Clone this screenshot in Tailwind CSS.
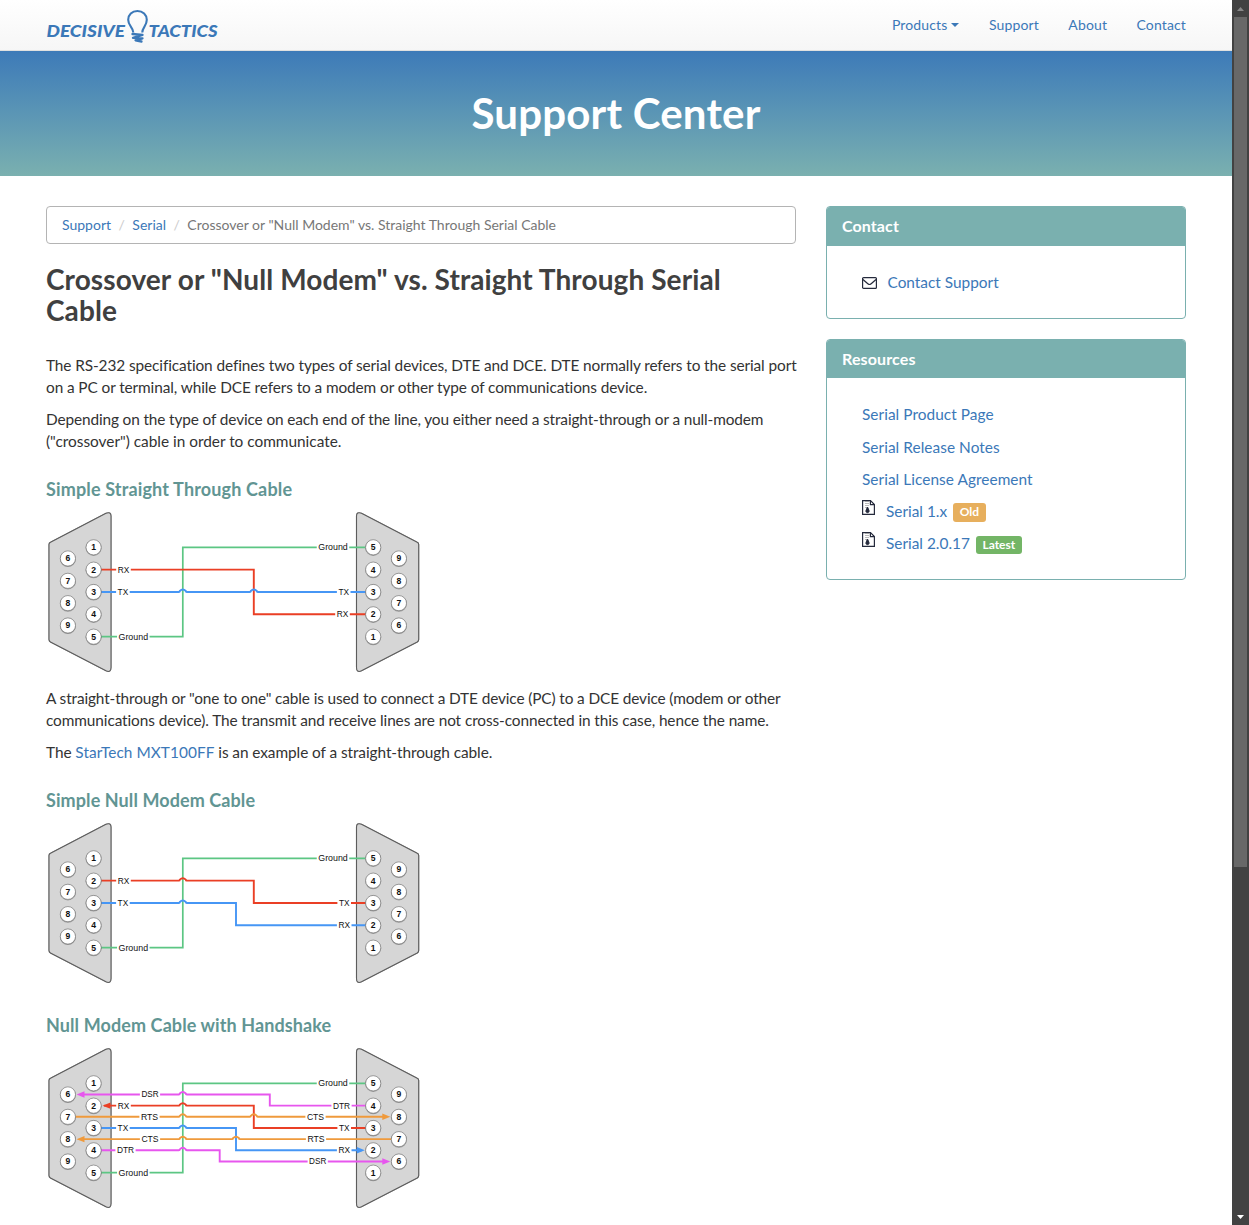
<!DOCTYPE html>
<html lang="en">
<head>
<meta charset="utf-8">
<title>Support Center</title>
<script src="https://cdn.jsdelivr.net/npm/@tailwindcss/browser@4"></script>
</head>
<body class="flex h-[1225px] overflow-hidden bg-white font-['Lato',sans-serif] text-[14px] text-[#333]">
<div class="h-[1225px] w-[1232px] shrink-0 overflow-hidden">
  <nav class="flex h-[51px] items-start justify-between border-b border-[#e0e0e0] bg-linear-to-b from-white to-[#f6f6f6] pr-[46px] pl-[46px]">
    <svg class="mt-[8px] shrink-0" width="174" height="38" viewBox="46 8 174 38" fill="none">
      <g fill="#3b78b8" font-family="Lato, sans-serif" font-weight="900" font-style="italic" font-size="17">
        <text x="46.500" y="37" textLength="78.500" lengthAdjust="spacingAndGlyphs">DECISIVE</text>
        <text x="148.500" y="37" textLength="69" lengthAdjust="spacingAndGlyphs">TACTICS</text>
      </g>
      <path d="M133.300 32.500C133 27 128.200 26 128.200 19.800C128.200 14.700 132 11 137.400 11C142.800 11 146.800 14.700 146.800 19.800C146.800 26 142.200 27.500 142.300 32.500" stroke="#3b78b8" stroke-width="2.100"/>
      <path d="M132.500 34L142.500 34.800L133 37.800L142.500 38.300L135.500 40.300L141.500 41.500" stroke="#3b78b8" stroke-width="2.300" stroke-linejoin="round" stroke-linecap="round"/>
    </svg>
    <div class="flex gap-[29.500px] pt-[15px] leading-5 tracking-[0.130px] text-[#3b78b8]">
      <a class="flex items-center">Products<span class="ml-1 border-x-4 border-t-4 border-x-transparent border-t-[#3b78b8]"></span></a>
      <a>Support</a><a>About</a><a>Contact</a>
    </div>
  </nav>
  <header class="flex h-[125px] items-center justify-center bg-linear-to-b from-[#3d7ab8] to-[#7ab0af] pb-[2px]">
    <h1 class="text-[42px] leading-[46px] font-bold tracking-[0.200px] text-white">Support Center</h1>
  </header>
  <main class="flex gap-[30px] px-[46px] pt-[30px]">
    <article class="w-[750px] shrink-0 text-[15.4px] leading-[22px]">
      <div class="flex h-[38px] items-center rounded border border-[#b4b4b4] px-[15px] text-[14px] text-[#777]">
        <a class="text-[#3b78b8]">Support</a><span class="px-[7.500px] text-[#ccc]">/</span><a class="text-[#3b78b8]">Serial</a><span class="px-[7.500px] text-[#ccc]">/</span><span>Crossover or "Null Modem" vs. Straight Through Serial Cable</span>
      </div>
      <h2 class="mt-[20px] mb-[28px] text-[28px] leading-[31px] font-bold tracking-[0.090px] text-[#404040]">Crossover or "Null Modem" vs. Straight Through Serial<br>Cable</h2>
      <p class="mb-[10px] tracking-[-0.100px] whitespace-nowrap">The RS-232 specification defines two types of serial devices, DTE and DCE. DTE normally refers to the serial port<br>on a PC or terminal, while DCE refers to a modem or other type of communications device.</p>
      <p class="whitespace-nowrap"><span class="tracking-[-0.130px]">Depending on the type of device on each end of the line, you either need a straight-through or a null-modem</span><br><span class="tracking-[-0.010px]">("crossover") cable in order to communicate.</span></p>
      <h4 class="mt-[27px] mb-[11px] text-[18px] leading-5 font-bold tracking-[0.150px] text-[#619593]">Simple Straight Through Cable</h4>
      <svg id="straight" class="block" width="376" height="168" viewBox="46 510 376 168"></svg>
      <p class="mt-[9px] mb-[10px] whitespace-nowrap"><span class="tracking-[-0.125px]">A straight-through or "one to one" cable is used to connect a DTE device (PC) to a DCE device (modem or other</span><br><span class="tracking-[-0.100px]">communications device). The transmit and receive lines are not cross-connected in this case, hence the name.</span></p>
      <p class="tracking-[-0.070px] whitespace-nowrap">The <a class="tracking-[0.050px] text-[#3b78b8]">StarTech MXT100FF</a> is an example of a straight-through cable.</p>
      <h4 class="mt-[27px] mb-[11px] text-[18px] leading-5 font-bold tracking-[0.090px] text-[#619593]">Simple Null Modem Cable</h4>
      <svg id="nullmodem" class="block" width="376" height="168" viewBox="46 510 376 168"></svg>
      <h4 class="mt-[26px] mb-[11px] text-[18px] leading-5 font-bold tracking-[0.100px] text-[#619593]">Null Modem Cable with Handshake</h4>
      <svg id="handshake" class="block" width="376" height="168" viewBox="46 510 376 168"></svg>
    </article>
    <aside class="w-[360px] shrink-0 text-[15.4px] leading-[22px]">
      <section class="mb-5 h-[113px] overflow-hidden rounded border border-[#7ab0af]">
        <h3 class="h-[39px] bg-[#7ab0af] px-[15px] pt-[8px] text-[16px] font-bold tracking-[0.100px] text-white">Contact</h3>
        <div class="flex items-center px-[35px] pt-[25px] text-[#3b78b8]">
          <svg class="mt-[2px] mr-[10.500px]" width="15" height="12" viewBox="0 0 15 12" fill="none" stroke="#252a3c" stroke-width="1.200"><rect x=".6" y=".6" width="13.800" height="10.800" rx="1"/><path d="M1 2.500C4 5 6 7.500 7.500 7.500S11 5 14 2.500"/></svg>
          <a>Contact Support</a>
        </div>
      </section>
      <section class="h-[241px] overflow-hidden rounded border border-[#7ab0af]">
        <h3 class="h-[38px] bg-[#7ab0af] px-[15px] pt-[8px] text-[16px] font-bold tracking-[0.130px] text-white">Resources</h3>
        <div class="flex flex-col gap-[10px] px-[35px] pt-[25px] text-[#3b78b8]">
          <a class="mb-px tracking-[0.050px]">Serial Product Page</a>
          <a class="tracking-[0.050px]">Serial Release Notes</a>
          <a class="tracking-[0.050px]">Serial License Agreement</a>
          <div class="flex h-[22px] items-center">
            <svg class="mr-[11px] mb-[7px]" width="13" height="15" viewBox="0 0 13 15" fill="none" stroke="#252a3c"><path d="M.6.600H8.500L12.400 4.500V14.400H.6ZM8.400.8V4.600H12.300" stroke-width="1.200"/><path d="M4 1V8M6 1V7" stroke-dasharray="1 1" stroke="#777"/><path d="M5.500 7L4 10.500a1.600 1.600 0 1 0 3 0Z" fill="#252a3c"/></svg>
            <a>Serial 1.x</a><span class="mt-[3px] ml-[6px] h-[19px] rounded-[3px] bg-[#e7af5d] px-[6.500px] text-[12px] leading-[18px] font-bold text-white">Old</span>
          </div>
          <div class="flex h-[22px] items-center">
            <svg class="mr-[11px] mb-[7px]" width="13" height="15" viewBox="0 0 13 15" fill="none" stroke="#252a3c"><path d="M.6.600H8.500L12.400 4.500V14.400H.6ZM8.400.8V4.600H12.300" stroke-width="1.200"/><path d="M4 1V8M6 1V7" stroke-dasharray="1 1" stroke="#777"/><path d="M5.500 7L4 10.500a1.600 1.600 0 1 0 3 0Z" fill="#252a3c"/></svg>
            <a>Serial 2.0.17</a><span class="mt-[4px] ml-[6px] h-[18px] rounded-[3px] bg-[#73b566] px-[6.500px] text-[12px] leading-[18px] font-bold text-white">Latest</span>
          </div>
        </div>
      </section>
    </aside>
  </main>
</div>
<div class="flex h-[1225px] w-[17px] shrink-0 flex-col items-center bg-[#424242]">
  <div class="flex h-[17px] items-center"><svg width="7" height="4" viewBox="0 0 7 4"><path d="M0 4L3.500 0L7 4Z" fill="#888"/></svg></div>
  <div class="mr-px h-[850px] w-[13px] bg-[#686868]"></div>
  <div class="mt-auto flex h-[17px] items-center"><svg width="7" height="4" viewBox="0 0 7 4"><path d="M0 0H7L3.500 4Z" fill="#fff"/></svg></div>
</div>
<script>
const G = '#5cc683', R = '#ea3f25', B = '#4696f5', M = '#e756ee', O = '#ef9a3c';
const y = n => 547.3 + (n - 1) * 11.17; // half-row n, 1..9
const shell = d => `<path d="${d}" fill="#d6d6d6" stroke="#5c5c5c" stroke-width="1.1" style="filter:drop-shadow(0 .5px .5px #0006)"/>`;
const pin = (x, n, t) => `<circle cx="${x}" cy="${y(n) + .6}" r="8" fill="#777" opacity=".6"/><circle cx="${x}" cy="${y(n)}" r="7.6" fill="#fff" stroke="#666" stroke-width=".6"/><text x="${x}" y="${y(n) + 3}" text-anchor="middle" font-weight="bold" font-size="8.6">${t}</text>`;
const wire = ([c, d]) => `<path d="${d}" fill="none" stroke="${c}" stroke-width="${c === G ? 1.7 : 1.9}"/>`;
const label = ([x, n, t]) => { const w = {Ground: 29.5, RX: 11.6, TX: 10.6}[t] || 17.2; return `<rect x="${x - w / 2 - 1.5}" y="${y(n) - 4}" width="${w + 3}" height="8" fill="#fff"/><text x="${x}" y="${y(n) + 2.9}" text-anchor="middle" font-size="8.8" textLength="${w}" lengthAdjust="spacingAndGlyphs">${t}</text>`; };
const hop = (x) => `H${x - 4} q1 0 1 -1 q3 -3 6 0 q0 1 1 1 `;
const arrow = ([c, x, n, dir]) => `<path d="M${x} ${y(n)}l${-8 * dir} -3.200v6.400Z" fill="${c}"/>`;
const ground = [G, `M101 ${y(9)}H182.800V${y(1)}H366`];
function draw(id, wires, labels, arrows = []) {
  let s = shell('M49 544.500Q49 543 50.500 542.300L106 513.200Q111 511.500 111 516V667.500Q111 673 106 670.800L50.500 642Q49 641 49 639.500Z')
    + shell('M418.700 544.500Q418.700 543 417.200 542.300L361.500 513.200Q356.500 511.500 356.500 516V667.500Q356.500 673 361.500 670.800L417.200 642Q418.700 641 418.700 639.500Z');
  s += wires.map(wire).join('') + labels.map(label).join('');
  for (let i = 0; i < 5; i++) s += pin(93.6, 1 + 2 * i, i + 1) + pin(373.2, 1 + 2 * i, 5 - i);
  for (let i = 0; i < 4; i++) s += pin(67.9, 2 + 2 * i, i + 6) + pin(398.9, 2 + 2 * i, 9 - i);
  s += arrows.map(arrow).join('');
  document.getElementById(id).innerHTML = `<g font-family="Liberation Sans, sans-serif" fill="#111">${s}</g>`;
}
const gl = [[133.3, 9, 'Ground'], [333, 1, 'Ground']];
draw('straight', [ground,
  [R, `M101 ${y(3)}H253.800V${y(7)}H366`],
  [B, `M101 ${y(5)}${hop(182.8)}${hop(253.8)}H366`]],
  [...gl, [123.5, 3, 'RX'], [122.9, 5, 'TX'], [343.7, 5, 'TX'], [342.5, 7, 'RX']]);
draw('nullmodem', [ground,
  [R, `M101 ${y(3)}${hop(182.8)}H253.800V${y(5)}H366`],
  [B, `M101 ${y(5)}${hop(182.8)}H236V${y(7)}H366`]],
  [...gl, [123.5, 3, 'RX'], [122.9, 5, 'TX'], [344.2, 5, 'TX'], [344.2, 7, 'RX']]);
draw('handshake', [ground,
  [M, `M80 ${y(2)}${hop(182.8)}H269.800V${y(3)}H366`],
  [R, `M104 ${y(3)}${hop(182.8)}H253.800V${y(5)}H366`],
  [O, `M75 ${y(4)}${hop(182.8)}${hop(253.8)}H386`],
  [B, `M101 ${y(5)}${hop(182.8)}H236V${y(7)}H362`],
  [O, `M80 ${y(6)}${hop(182.8)}${hop(236)}H392`],
  [M, `M101 ${y(7)}${hop(182.8)}H219.700V${y(8)}H386`]],
  [...gl, [150, 2, 'DSR'], [123.5, 3, 'RX'], [149.5, 4, 'RTS'], [122.9, 5, 'TX'], [150, 6, 'CTS'], [125.5, 7, 'DTR'],
   [341.5, 3, 'DTR'], [315.5, 4, 'CTS'], [344.2, 5, 'TX'], [316, 6, 'RTS'], [344.2, 7, 'RX'], [317.7, 8, 'DSR']],
  [[M, 76.5, 2, -1], [R, 102.5, 3, -1], [O, 76.5, 6, -1], [O, 390.3, 4, 1], [B, 364.8, 7, 1], [M, 390.3, 8, 1]]);
</script>
</body>
</html>
